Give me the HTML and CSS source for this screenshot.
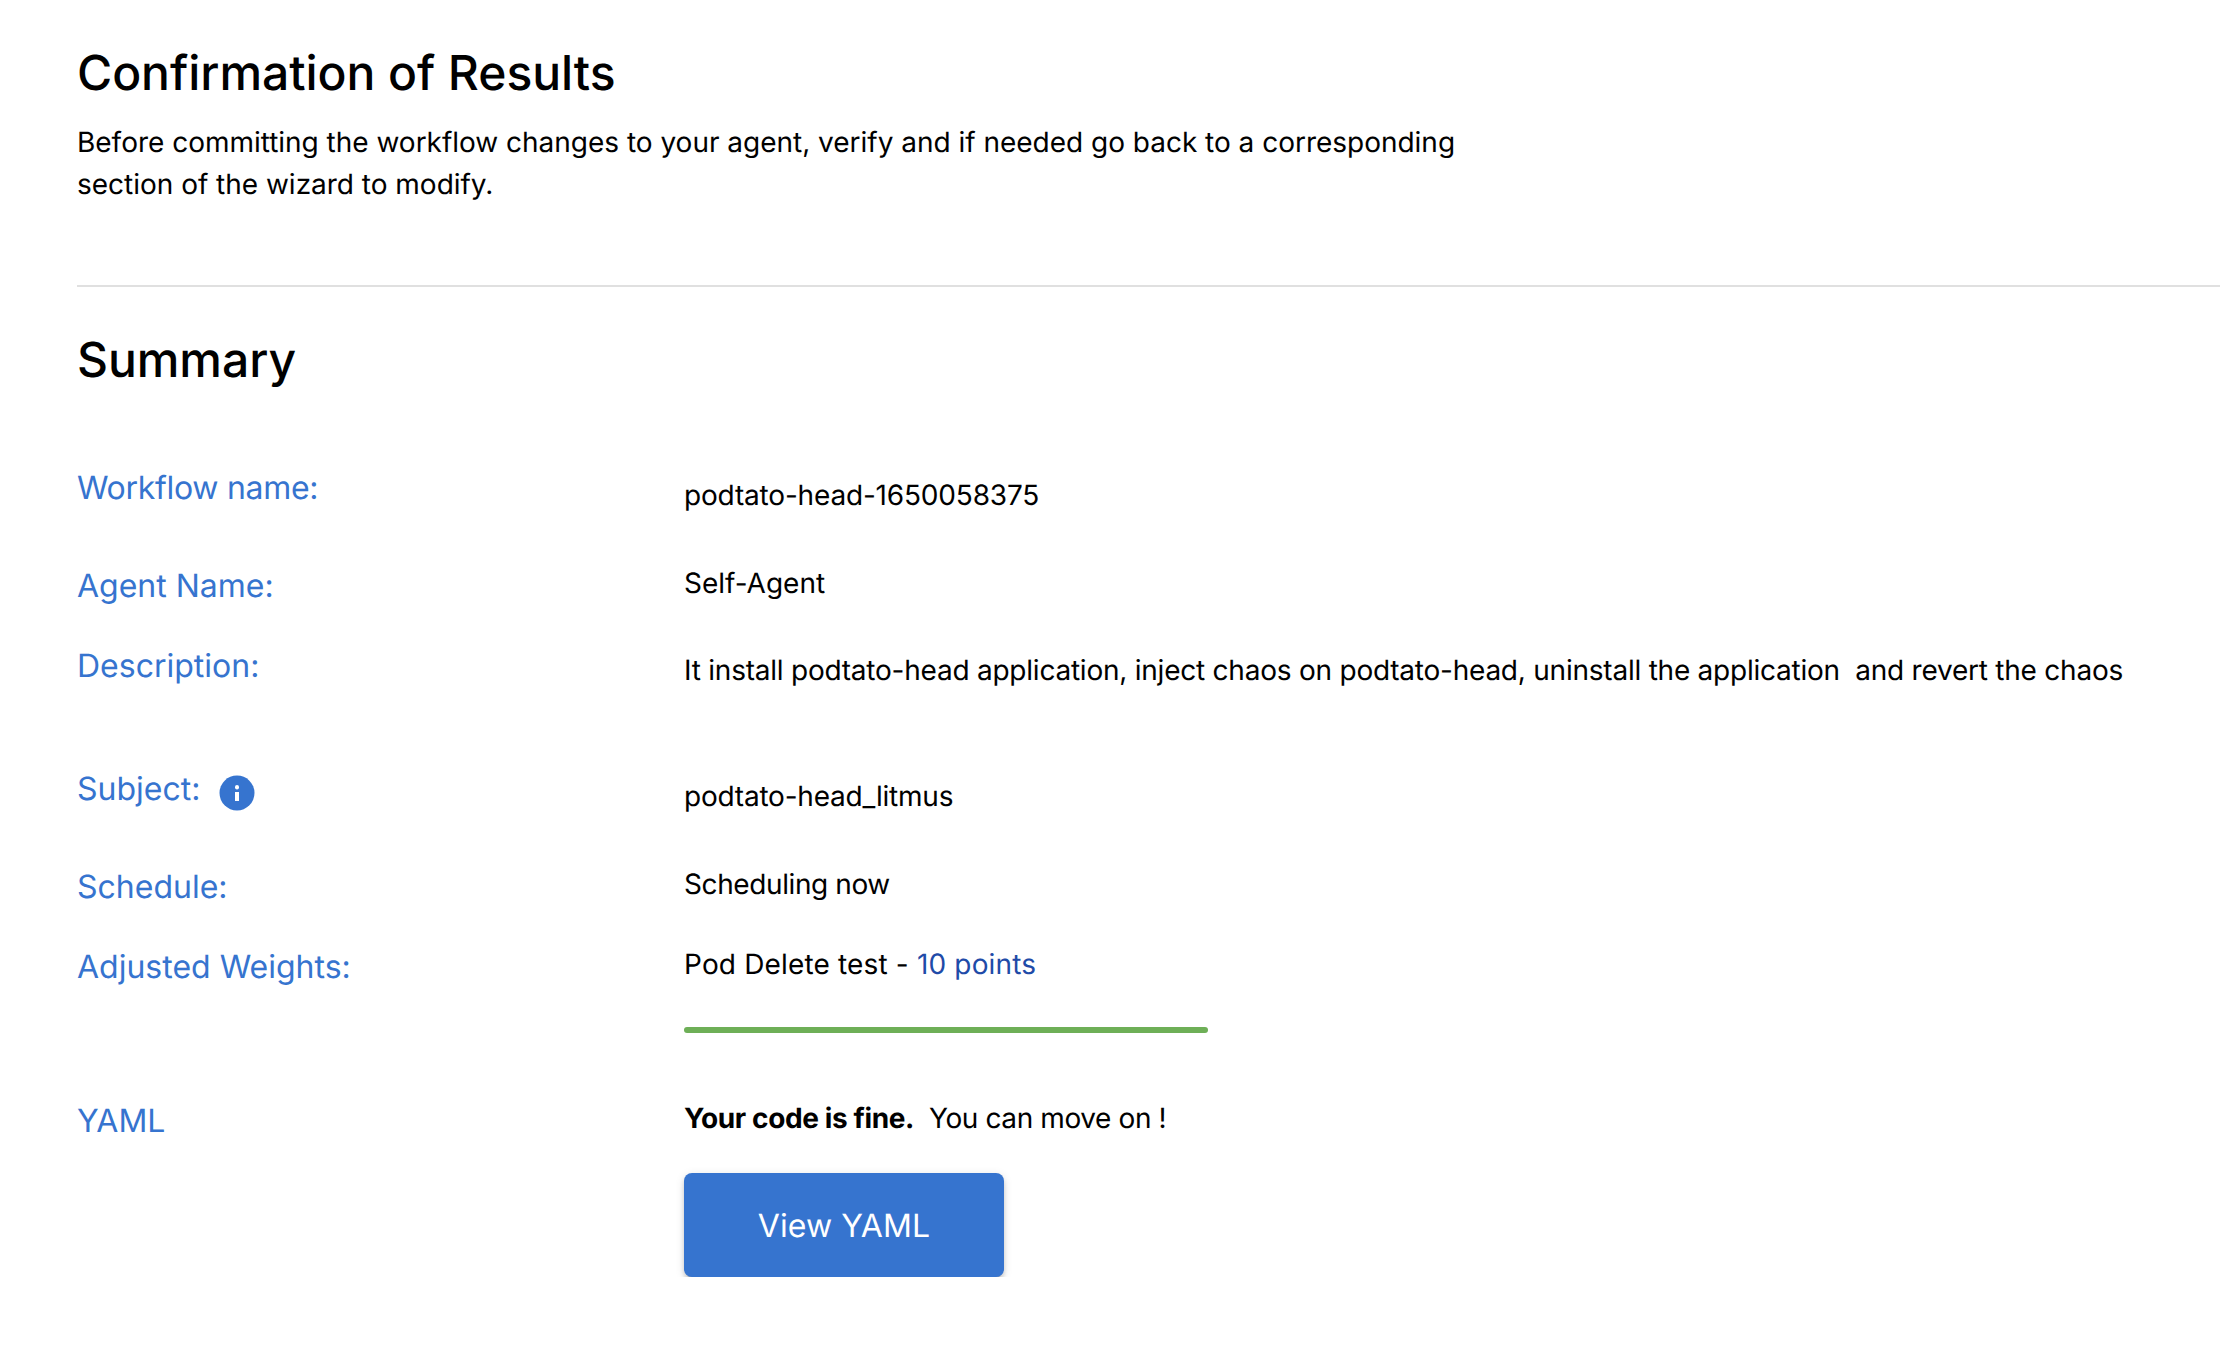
FILE: index.html
```html
<!DOCTYPE html>
<html lang="en">
<head>
<meta charset="utf-8">
<title>Confirmation of Results</title>
<link rel="stylesheet" href="styles.css">
</head>
<body>
<main class="page">
  <header class="intro">
    <h1 class="title">Confirmation of Results</h1>
    <p class="lead">Before committing the workflow changes to your agent, verify and if needed go back to a corresponding section of the wizard to modify.</p>
  </header>
  <hr class="divider">
  <h2 class="title summary-title">Summary</h2>
  <section class="summary">
    <div class="row row-name">
      <div class="label label-tight">Workflow name:</div>
      <div class="value value-name">podtato-head-1650058375</div>
    </div>
    <div class="row row-agent">
      <div class="label">Agent Name:</div>
      <div class="value value-up">Self-Agent</div>
    </div>
    <div class="row row-desc">
      <div class="label">Description:</div>
      <div class="value value-desc">It install podtato-head application, inject chaos on podtato-head, uninstall the application&nbsp; and revert the chaos</div>
    </div>
    <div class="row row-subject">
      <div class="label label-icon">Subject:
        <svg class="info" viewBox="0 0 36 36" aria-hidden="true"><circle cx="18" cy="18" r="17.5" fill="#3674CF"/><rect x="16" y="17" width="4" height="9" fill="#fff"/><rect x="16" y="10" width="4" height="4.6" rx="2" fill="#fff"/></svg>
      </div>
      <div class="value value-name value-subject">podtato-head_litmus</div>
    </div>
    <div class="row row-schedule">
      <div class="label">Schedule:</div>
      <div class="value value-up value-schedule">Scheduling now</div>
    </div>
    <div class="row row-weights">
      <div class="label">Adjusted Weights:</div>
      <div class="value value-weights">
        <div class="pod">Pod Delete test - <span class="points">10 points</span></div>
        <div class="bar"></div>
      </div>
    </div>
    <div class="row row-yaml">
      <div class="label">YAML</div>
      <div class="value value-yaml">
        <div class="check"><strong class="fine">Your code is fine.</strong>&nbsp; You can move on !</div>
        <button class="btn" type="button">View YAML</button>
      </div>
    </div>
  </section>
</main>
</body>
</html>
```
FILE: styles.css
```css
* { box-sizing: border-box; }
html, body { margin: 0; background: #fff; }
body { font-family: Inter, "Liberation Sans", sans-serif; color: #000; text-rendering: geometricPrecision; }
.page { padding: 46px 0 0 77px; }
.title { margin: 0; font-size: 48px; font-weight: 500; line-height: 54px; letter-spacing: -0.05px; }
.lead { margin: 21px 0 0; width: 1420px; font-size: 28px; line-height: 42px; letter-spacing: -0.015px; }
.divider { margin: 80px 0 0; border: 0; height: 2px; background: #e0e0e0; }
.summary-title { margin-top: 46px; }
.summary { margin-top: 79px; }
.row { display: grid; grid-template-columns: 607px 1fr; align-items: start; }
.label { color: #3674CF; font-size: 32px; line-height: 44px; }
.label-tight { letter-spacing: -0.3px; }
.label-icon { display: flex; align-items: center; gap: 18px; padding-top: 1px; }
.info { width: 36px; height: 36px; margin: 7px 0 0 1px; }
.value { font-size: 28px; line-height: 42px; }
.value-name { padding-top: 8px; letter-spacing: -0.18px; }
.value-subject { padding-top: 9px; letter-spacing: -0.22px; }
.value-up { margin-top: -2px; }
.value-schedule { letter-spacing: -0.4px; }
.value-desc { padding-top: 5px; white-space: nowrap; letter-spacing: -0.23px; }
.value-weights { margin-top: -2px; }
.value-yaml { margin-top: -2px; }
.pod { letter-spacing: 0.16px; }
.check { letter-spacing: -0.39px; }
.row-name { height: 98px; }
.row-agent { height: 80px; }
.row-desc { height: 122px; }
.row-subject { height: 99px; }
.row-schedule { height: 80px; }
.row-weights { height: 154px; }
.points { color: #1F4BA8; }
.bar { margin-top: 42px; width: 524px; height: 6px; border-radius: 3px; background: #6EAF57; }
.fine { font-weight: 700; }
.btn { display: block; margin-top: 34px; width: 320px; height: 104px; border: 0; border-radius: 8px; background: #3674CF; color: #fff; font: 400 32px Inter, "Liberation Sans", sans-serif; letter-spacing: 0.1px; text-rendering: geometricPrecision; box-shadow: 0 6px 2px -4px rgba(0,0,0,.2), 0 4px 4px rgba(0,0,0,.14), 0 2px 10px rgba(0,0,0,.12); }
```
